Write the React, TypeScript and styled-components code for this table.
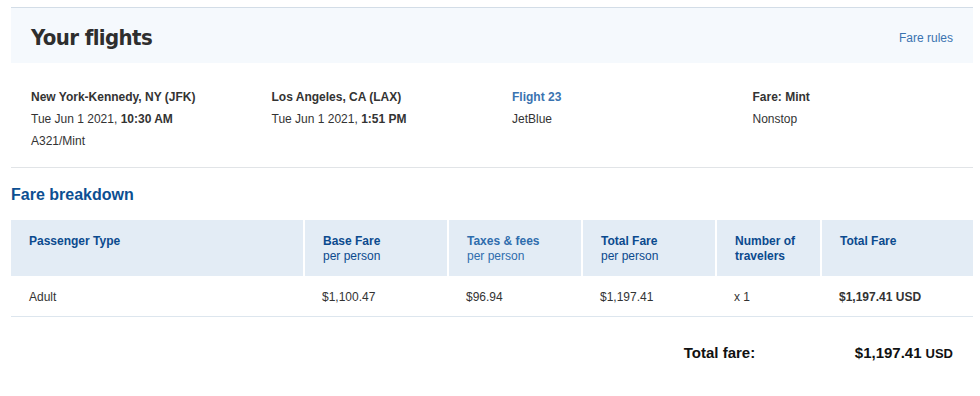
import React from "react";
import styled, { createGlobalStyle } from "styled-components";

const Global = createGlobalStyle`
  html, body { margin: 0; padding: 0; background: #fff; }
  body { font-family: "Liberation Sans", Arial, sans-serif; color: #333; }
`;

const Page = styled.div`
  width: 962px;
  margin-left: 11px;
  padding-top: 7px;
`;

const HeaderBand = styled.div`
  height: 55px;
  border-top: 1px solid #d3dde7;
  background: #f5f9fd;
  display: flex;
  align-items: center;
  justify-content: space-between;
  padding: 0 20px;
`;

const Title = styled.h1`
  margin: 0;
  font-family: "DejaVu Sans Condensed", "DejaVu Sans", sans-serif;
  font-stretch: condensed;
  font-weight: 700;
  font-size: 22px;
  letter-spacing: -0.6px;
  color: #2e2e2e;
  padding-top: 3px;
`;

const Link = styled.a`
  font-size: 12px;
  color: #3a73b0;
  text-decoration: none;
  padding-top: 4px;
`;

const Details = styled.div`
  display: grid;
  grid-template-columns: repeat(4, 1fr);
  padding: 23px 0 15px;
  border-bottom: 1px solid #e1e4e7;
`;

const DetailCol = styled.div`
  padding-left: 20px;
  font-size: 12px;
  line-height: 22px;
  color: #333;
`;

const Line = styled.div<{ $bold?: boolean; $link?: boolean }>`
  font-weight: ${(p) => (p.$bold ? 700 : 400)};
  color: ${(p) => (p.$link ? "#3a73b0" : "#333")};
`;

const SectionTitle = styled.h2`
  margin: 17px 0 15px;
  font-size: 16px;
  line-height: 20px;
  font-weight: 700;
  color: #0c4f92;
`;

const Table = styled.table`
  width: 100%;
  border-collapse: collapse;
  table-layout: fixed;
`;

const Th = styled.th<{ $w: number; $light?: boolean }>`
  width: ${(p) => p.$w}px;
  background: #e3ecf5;
  height: 56px;
  box-sizing: border-box;
  padding: 14px 18px 9px;
  vertical-align: top;
  text-align: left;
  font-size: 12px;
  line-height: 15px;
  font-weight: 700;
  color: ${(p) => (p.$light ? "#2f6dad" : "#0b4a8e")};
  & + & { border-left: 2px solid #fff; }
`;

const Sub = styled.div`
  font-weight: 400;
`;

const Td = styled.td<{ $bold?: boolean }>`
  height: 40px;
  box-sizing: border-box;
  padding: 2px 18px 0;
  font-size: 12px;
  font-weight: ${(p) => (p.$bold ? 700 : 400)};
  color: #333;
  border-bottom: 1px solid #dde6ee;
`;

const TotalRow = styled.div`
  display: flex;
  justify-content: flex-end;
  align-items: baseline;
  padding: 27px 20px 0 0;
  font-weight: 700;
  color: #111;
`;

const TotalLabel = styled.span`
  font-size: 15px;
  width: 171px;
`;

const TotalValue = styled.span`
  font-size: 15px;
`;

const Currency = styled.span`
  font-size: 13px;
  margin-left: 4px;
`;

const cols = [
  { w: 293, title: "Passenger Type" },
  { w: 144, title: "Base Fare", sub: "per person" },
  { w: 134, title: "Taxes & fees", sub: "per person", light: true },
  { w: 134, title: "Total Fare", sub: "per person" },
  { w: 105, title: "Number of travelers" },
  { w: 152, title: "Total Fare" },
];

export default function App() {
  return (
    <>
      <Global />
      <Page>
        <HeaderBand>
          <Title>Your flights</Title>
          <Link href="#">Fare rules</Link>
        </HeaderBand>
        <Details>
          <DetailCol>
            <Line $bold>New York-Kennedy, NY (JFK)</Line>
            <Line>
              Tue Jun 1 2021, <b>10:30 AM</b>
            </Line>
            <Line>A321/Mint</Line>
          </DetailCol>
          <DetailCol>
            <Line $bold>Los Angeles, CA (LAX)</Line>
            <Line>
              Tue Jun 1 2021, <b>1:51 PM</b>
            </Line>
          </DetailCol>
          <DetailCol>
            <Line $bold $link>Flight 23</Line>
            <Line>JetBlue</Line>
          </DetailCol>
          <DetailCol>
            <Line $bold>Fare: Mint</Line>
            <Line>Nonstop</Line>
          </DetailCol>
        </Details>
        <SectionTitle>Fare breakdown</SectionTitle>
        <Table>
          <thead>
            <tr>
              {cols.map((c, i) => (
                <Th key={i} $w={c.w} $light={c.light}>
                  {c.title}
                  {c.sub && <Sub>{c.sub}</Sub>}
                </Th>
              ))}
            </tr>
          </thead>
          <tbody>
            <tr>
              <Td>Adult</Td>
              <Td>$1,100.47</Td>
              <Td>$96.94</Td>
              <Td>$1,197.41</Td>
              <Td>x 1</Td>
              <Td $bold>$1,197.41 USD</Td>
            </tr>
          </tbody>
        </Table>
        <TotalRow>
          <TotalLabel>Total fare:</TotalLabel>
          <TotalValue>
            $1,197.41<Currency>USD</Currency>
          </TotalValue>
        </TotalRow>
      </Page>
    </>
  );
}
